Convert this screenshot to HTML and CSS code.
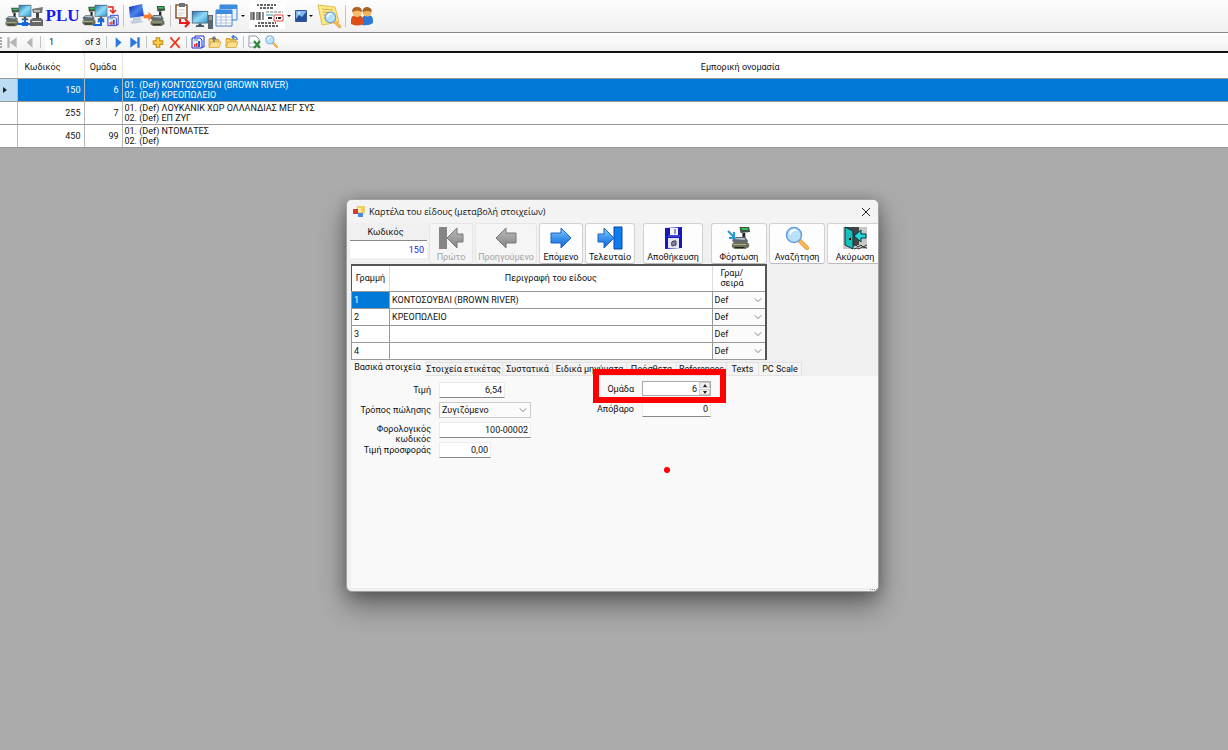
FILE: index.html
```html
<!DOCTYPE html>
<html lang="el">
<head>
<meta charset="utf-8">
<title>PLU</title>
<link rel="stylesheet" href="styles.css">
</head>
<body>
<svg class="defs" aria-hidden="true">
  <defs>
    <linearGradient id="gBlue" x1="0" y1="0" x2="0" y2="1"><stop offset="0" stop-color="#8cd0ff"/><stop offset=".5" stop-color="#3b93ee"/><stop offset="1" stop-color="#1467cf"/></linearGradient>
    <linearGradient id="gGray" x1="0" y1="0" x2="0" y2="1"><stop offset="0" stop-color="#bbb"/><stop offset="1" stop-color="#858585"/></linearGradient>
    <linearGradient id="gScreen" x1="0" y1="0" x2="1" y2="1"><stop offset="0" stop-color="#2c78b8"/><stop offset=".5" stop-color="#8fdcf5"/><stop offset="1" stop-color="#3a9ad2"/></linearGradient>
    <linearGradient id="gNavy" x1="0" y1="0" x2="1" y2="1"><stop offset="0" stop-color="#0a1fa8"/><stop offset=".5" stop-color="#4a86f0"/><stop offset="1" stop-color="#1230b8"/></linearGradient>
    <symbol id="scale" viewBox="0 0 22 24" preserveAspectRatio="none">
      <path d="M10 1h10l1 5-10 1z" fill="#454d48"/><path d="M12 2h7v2h-7z" fill="#27c84a"/>
      <path d="M13 7h3v8h-3z" fill="#222"/>
      <path d="M2 14l4-3h10l3 4-2 2H4z" fill="#5d6c74"/><path d="M4 13l3-1h8l1 2z" fill="#b5c4c9"/>
      <path d="M2 18l3-2h13l2 2v3l-4 2H5l-3-2z" fill="#6b705a"/><path d="M3 18h14v1H3z" fill="#b0b392"/><path d="M5 21h10v1H5z" fill="#20241b"/>
    </symbol>
    <symbol id="monitor" viewBox="0 0 22 20" preserveAspectRatio="none">
      <path d="M1 1h20v14H1z" fill="#4c6876"/><path d="M2 2h18v12H2z" fill="url(#gScreen)"/>
      <path d="M9 15h4v2h3v2H6v-2h3z" fill="#415661"/>
    </symbol>
    <symbol id="report" viewBox="0 0 14 14">
      <path d="M4 1h9v11H4z" fill="#fff" stroke="#1d2bd8"/><path d="M1 3h8l2 2v8H1z" fill="#eaf1ff" stroke="#1d2bd8"/>
      <path d="M3 9h1.500v3H3zM5 8h1.500v4H5z" fill="#e02a2a"/><path d="M7 6h2v6H7z" fill="#2455e0"/><path d="M3 5h4" stroke="#34a060"/>
    </symbol>
    <symbol id="lens" viewBox="0 0 24 24">
      <path d="M14 14l8 8" stroke="#c98a35" stroke-width="4" stroke-linecap="round"/><path d="M15 15l7 7" stroke="#ffb64c" stroke-width="3" stroke-linecap="round"/>
      <circle cx="9" cy="9" r="7.500" fill="#b7e1fb" stroke="#6a9fe0" stroke-width="1.600"/><path d="M5 9a5 5 0 0 1 6-5" stroke="#fff" stroke-width="2" fill="none"/>
    </symbol>
    <symbol id="folder" viewBox="0 0 14 14">
      <path d="M1 3h4l1 1h5v3H1z" fill="#e2a932"/><path d="M1 12V4h3l1 1h6v2" fill="#f7d372" stroke="#c99127" stroke-width=".7"/><path d="M3 7h10l-2 5.500H1z" fill="#ffe08a" stroke="#d09a2b" stroke-width=".7"/>
    </symbol>
    <symbol id="arrowR" viewBox="0 0 20 20"><path d="M1 7h9V2l9 8-9 8v-5H1z" stroke-width="1" stroke-linejoin="round"/></symbol>
    <symbol id="chev" viewBox="0 0 10 6"><path d="M1 1l4 4 4-4" fill="none" stroke="#666"/></symbol>
  </defs>
</svg>

<main class="app">
  <div class="toolbar main-bar" role="toolbar" aria-label="Main">
    <button class="tool" aria-label="Network"><svg width="40" height="24" viewBox="0 0 40 24"><use href="#scale" x="0" y="3" width="16" height="20"/><use href="#monitor" x="14" y="0" width="14" height="17"/><path d="M14 20h14M21 15v4" stroke="#1568dc" stroke-width="2"/><path d="M18 18h6v4h-6z" fill="#1568dc"/><path d="M28 5l11-2-1 6h-9z" fill="#777"/><path d="M30 6h6v2h-6z" fill="#bbb"/><path d="M32 9h3v7h-3z" fill="#444"/><path d="M26 16l3-2h8l2 2v6H26z" fill="#686868"/><path d="M28 17h9v1h-9z" fill="#ddd"/></svg></button>
    <button class="tool plu">PLU</button>
    <button class="tool" aria-label="Reports"><svg width="38" height="24" viewBox="0 0 38 24"><use href="#scale" x="0" y="2" width="16" height="20"/><use href="#monitor" x="13" y="0" width="14" height="17"/><path d="M12 21h8v-6M17 18l3-3 3 3" stroke="#1568dc" stroke-width="2" fill="none"/><path d="M27 3h5v6M29 6l3 3 3-3" stroke="#ef1d1d" stroke-width="1.500" fill="none"/><use href="#report" x="26" y="10" width="12" height="13"/></svg></button>
    <span class="sep"></span>
    <button class="tool" aria-label="Send"><svg width="38" height="24" viewBox="0 0 38 24"><path d="M1 3l13-3 2 12-14 2z" fill="url(#gNavy)"/><path d="M5 14l7-1 2 3-9 1zM2 17l10-1 4 2-12 2z" fill="#c3ccdd"/><use href="#arrowR" x="15" y="7" width="11" height="11" fill="#ff7a28"/><use href="#scale" x="21" y="1" width="17" height="22"/></svg></button>
    <span class="sep"></span>
    <button class="tool" aria-label="Paste to PC"><svg width="38" height="26" viewBox="0 0 38 26"><path d="M1 2h11v13H1z" fill="#fff" stroke="#89552d" stroke-width="1.500"/><path d="M4 0h6v4H4z" fill="#6b737e"/><path d="M3 7h7M3 10h7M3 12h5" stroke="#ccc"/><path d="M5 16v4h8M10 16l4 4-4 4" stroke="#e51c1c" stroke-width="2" fill="none"/><use href="#monitor" x="16" y="7" width="18" height="18"/><path d="M33 12h5v14h-5z" fill="#59666c"/><path d="M34 14h3M34 16h3" stroke="#ccc"/></svg></button>
    <button class="tool drop" aria-label="Tables"><svg width="24" height="24" viewBox="0 0 24 24"><path d="M5 1h17v15H5z" fill="#e9f3ff" stroke="#3a7fcf"/><path d="M5 1h17v4H5z" fill="#3c8de0"/><path d="M1 6h16v16H1z" fill="#fff" stroke="#3a7fcf"/><path d="M1 6h16v4H1z" fill="#3c8de0"/><path d="M2 13h14M2 16h14M2 19h14M6 10v12M11 10v12" stroke="#b4bedb"/></svg><i class="caret"></i></button>
    <button class="tool drop" aria-label="Label"><svg width="36" height="26" viewBox="0 0 36 26"><path d="M0 0h36v26H0z" fill="#fff"/><path d="M8 2h19M11 5h13M9 20h18M6 23h24" stroke="#333" stroke-width="1.500" stroke-dasharray="2 1 3 1"/><path d="M2 9v8M4 9v8M5 9v8M8 9v8M10 9v8M11 9v8M14 9v8" stroke="#222"/><path d="M17 9h17" stroke="#777" stroke-dasharray="3 1"/><path d="M17 12h7" stroke="#3595a8"/><path d="M19 15h4" stroke="#333" stroke-width="2"/><path d="M25 12h9v6h-9z" fill="#fff" stroke="#e04a3b"/><path d="M27 15h6" stroke="#222" stroke-width="2" stroke-dasharray="1 1 3 1"/></svg><i class="caret"></i></button>
    <button class="tool drop" aria-label="Image"><svg width="12" height="12" viewBox="0 0 12 12"><path d="M.5.500h11v11H.5z" fill="#83b8f3" stroke="#31579c"/><path d="M1 9l3-4 3 2 4-5v9H1z" fill="#244d9d"/><circle cx="4" cy="3" r="1" fill="#fff"/></svg><i class="caret"></i></button>
    <button class="tool" aria-label="Find note"><svg width="24" height="24" viewBox="0 0 24 24"><path d="M1 1l17 2 4 15-17 3z" fill="#fce884" stroke="#e2bd4a"/><path d="M5 5l11 1M6 8l10 1M6 11l9 1M7 14l8 1" stroke="#d2b04c"/><use href="#lens" x="7" y="7" width="17" height="17"/></svg></button>
    <span class="sep"></span>
    <button class="tool" aria-label="Users"><svg width="24" height="20" viewBox="0 0 24 20"><path d="M12 19v-6q1-4 5-4 6 0 6 5v3q-4 3-11 2" fill="#2d78d6"/><circle cx="17" cy="6" r="4.500" fill="#f0b45c"/><path d="M12.500 6q0-5 5-5 5 1 4 5-3-2-9 0" fill="#a56422"/><path d="M1 18v-4q0-5 6-5t6 5v4q-5 3-12 0" fill="#df4e19"/><circle cx="7" cy="6.500" r="4.500" fill="#f5bd67"/><path d="M2 6q0-5 5-5t5 5Q8 3 2 6" fill="#b0601f"/></svg></button>
  </div>

  <div class="toolbar nav-bar" role="toolbar" aria-label="Navigation">
    <span class="grip"></span>
    <button class="mini" aria-label="First"><svg viewBox="0 0 12 12"><path d="M2 2h2v9H2zM10 2v9L4 6.500z" fill="#b6b6b6"/></svg></button>
    <button class="mini" aria-label="Previous"><svg viewBox="0 0 12 12"><path d="M9 2v9L4 6.500z" fill="#b6b6b6"/></svg></button>
    <span class="sep"></span>
    <input class="page" aria-label="Position" value="1">
    <span class="of">of 3</span>
    <span class="sep"></span>
    <button class="mini" aria-label="Next"><svg viewBox="0 0 12 12"><path d="M4 2v9l5-4.500z" fill="#2878dd"/></svg></button>
    <button class="mini" aria-label="Last"><svg viewBox="0 0 12 12"><path d="M2 2v9l6-4.500zM8 2h2v9H8z" fill="#2878dd"/></svg></button>
    <span class="sep"></span>
    <button class="mini" aria-label="Add"><svg viewBox="0 0 12 12"><path d="M4.500 2.500h3v2.500h2.500v3H7.500v2.500h-3V8H2V5h2.500z" fill="#ffcf45" stroke="#c48e1e"/></svg></button>
    <button class="mini" aria-label="Delete"><svg viewBox="0 0 12 12"><path d="M2 2l8 9M10 2L2 11" stroke="#ef3a22" stroke-width="1.500"/></svg></button>
    <span class="sep"></span>
    <button class="mini" aria-label="Report"><svg viewBox="0 0 14 14"><use href="#report"/></svg></button>
    <button class="mini" aria-label="Export"><svg viewBox="0 0 14 14"><use href="#folder"/><path d="M6 7V2M4 4l2-2 2 2" stroke="#6a7886" fill="none" stroke-width="1.500"/></svg></button>
    <button class="mini" aria-label="Import"><svg viewBox="0 0 14 14"><use href="#folder"/><path d="M12 5q0-4-5-3M9 0L7 2l2 2" stroke="#397dc4" fill="none" stroke-width="1.400"/></svg></button>
    <span class="sep"></span>
    <button class="mini" aria-label="Excel"><svg viewBox="0 0 14 14"><path d="M1 1h7l3 3v8H1z" fill="#fff" stroke="#879aac"/><path d="M2 8h6" stroke="#a8bfd6"/><path d="M6 6l6 7M12 6l-6 7" stroke="#27852e" stroke-width="2"/></svg></button>
    <button class="mini" aria-label="Search"><svg viewBox="0 0 26 26"><use href="#lens" width="24" height="24"/></svg></button>
  </div>

  <table class="items">
    <colgroup><col class="c-mark"><col class="c-code"><col class="c-group"><col></colgroup>
    <thead><tr><th></th><th class="sortable">Κωδικός</th><th>Ομάδα</th><th class="trade">Εμπορική ονομασία</th></tr></thead>
    <tbody>
      <tr class="selected"><td><i class="marker"></i></td><td>150</td><td>6</td><td>01. (Def) ΚΟΝΤΟΣΟΥΒΛΙ (BROWN RIVER)<br>02. (Def) ΚΡΕΟΠΩΛΕΙΟ</td></tr>
      <tr><td></td><td>255</td><td>7</td><td>01. (Def) ΛΟΥΚΑΝΙΚ ΧΩΡ ΟΛΛΑΝΔΙΑΣ ΜΕΓ ΣΥΣ<br>02. (Def) ΕΠ ΖΥΓ</td></tr>
      <tr><td></td><td>450</td><td>99</td><td>01. (Def) ΝΤΟΜΑΤΕΣ<br>02. (Def)</td></tr>
    </tbody>
  </table>
</main>

<section class="dialog" role="dialog" aria-labelledby="dlg-title">
  <header class="titlebar">
    <svg width="12" height="12" viewBox="0 0 12 12"><path d="M4 0h8v7H4z" fill="#f6cf49" stroke="#ccc" stroke-width=".6"/><path d="M0 3h5v5H0z" fill="#d43b2d"/><path d="M5 7h5v4H5z" fill="#4b87e4"/><path d="M5 2h3v4H5z" fill="#fff1a8"/></svg>
    <h1 id="dlg-title">Καρτέλα του είδους (μεταβολή στοιχείων)</h1>
    <button class="close" aria-label="Close"><svg width="10" height="10" viewBox="0 0 10 10"><path d="M1 1l8 8M9 1L1 9" stroke="#222"/></svg></button>
  </header>

  <div class="commands">
    <div class="code"><label for="code">Κωδικός</label><input id="code" value="150"></div>
    <button class="cmd w-44" disabled><svg viewBox="0 0 26 24"><path d="M1 1h8v22H1z" fill="#858585"/><path d="M25 8h-6V2L9 12l10 10v-6h6z" fill="url(#gGray)" stroke="#777"/></svg>Πρώτο</button>
    <button class="cmd w-62" disabled><svg viewBox="0 0 26 24"><path d="M23 7H13V2L3 12l10 10v-5h10z" fill="url(#gGray)" stroke="#777"/></svg>Προηγούμενο</button>
    <button class="cmd w-44"><svg viewBox="0 0 26 24"><path d="M3 7h10V2l10 10-10 10v-5H3z" fill="url(#gBlue)" stroke="#1c64bb"/></svg>Επόμενο</button>
    <button class="cmd w-50"><svg viewBox="0 0 26 24"><path d="M17 1h8v22h-8z" fill="#0f7cf0" stroke="#0844a4"/><path d="M1 8h6V2l10 10L7 22v-6H1z" fill="url(#gBlue)" stroke="#1c64bb"/></svg>Τελευταίο</button>
    <button class="cmd w-60 apart"><svg viewBox="0 0 26 24"><path d="M5 2l17-1v21L5 23z" fill="#1618b7"/><path d="M10 2h8v7h-8z" fill="#f4f4f4"/><path d="M8 12h11v10H8z" fill="#e4e4ec"/><path d="M15 3v5M12 20q-2-6 4-5v4z" stroke="#3c3c5c" fill="#80809b"/><path d="M8 10h12" stroke="#6b6df4" stroke-width="1"/></svg>Αποθήκευση</button>
    <button class="cmd w-56 apart"><svg viewBox="0 0 26 24"><use href="#scale" x="4" y="0" width="21" height="24"/><path d="M2 5l6 6M8 6v6H3" stroke="#2499da" stroke-width="2" fill="none"/></svg>Φόρτωση</button>
    <button class="cmd w-56"><svg viewBox="0 0 24 24"><use href="#lens"/></svg>Αναζήτηση</button>
    <button class="cmd w-56"><svg viewBox="0 0 26 24"><path d="M1 1h24v22H1z" fill="#c7c7c7"/><path d="M3 1h14v18H3z" fill="#444"/><path d="M3 1l8 4v18l-8-4z" fill="#18c0bd" stroke="#033"/><path d="M8 12v2" stroke="#000" stroke-width="2"/><path d="M24 8h-5V4l-7 6 7 6v-4h5z" fill="#25d6d3" stroke="#034"/><path d="M11 20l3-1 2 2 3-2 2 2 4-2M12 23l3-1 2 1 3-2 5 1" stroke="#333" fill="none"/></svg>Ακύρωση</button>
  </div>

  <table class="lines">
    <colgroup><col class="l-no"><col><col class="l-type"></colgroup>
    <thead><tr><th>Γραμμή</th><th>Περιγραφή του είδους</th><th class="type">Γραμ/<br>σειρά</th></tr></thead>
    <tbody>
      <tr><td class="on">1</td><td>ΚΟΝΤΟΣΟΥΒΛΙ (BROWN RIVER)</td><td><span class="pick"><select aria-label="Γραμματοσειρά 1"><option>Def</option></select><svg><use href="#chev"/></svg></span></td></tr>
      <tr><td>2</td><td>ΚΡΕΟΠΩΛΕΙΟ</td><td><span class="pick"><select aria-label="Γραμματοσειρά 2"><option>Def</option></select><svg><use href="#chev"/></svg></span></td></tr>
      <tr><td>3</td><td></td><td><span class="pick"><select aria-label="Γραμματοσειρά 3"><option>Def</option></select><svg><use href="#chev"/></svg></span></td></tr>
      <tr><td>4</td><td></td><td><span class="pick"><select aria-label="Γραμματοσειρά 4"><option>Def</option></select><svg><use href="#chev"/></svg></span></td></tr>
    </tbody>
  </table>

  <div class="tabs" role="tablist">
    <button role="tab" aria-selected="true" class="tab t-74">Βασικά στοιχεία</button>
    <button role="tab" class="tab t-78">Στοιχεία ετικέτας</button>
    <button role="tab" class="tab t-50">Συστατικά</button>
    <button role="tab" class="tab t-74">Ειδικά μηνύματα</button>
    <button role="tab" class="tab t-50">Πρόσθετα</button>
    <button role="tab" class="tab t-50">References</button>
    <button role="tab" class="tab t-32">Texts</button>
    <button role="tab" class="tab t-43">PC Scale</button>
  </div>

  <div class="panel" role="tabpanel">
    <div class="fields left">
      <label for="price">Τιμή</label><input id="price" class="f-66" value="6,54">
      <label for="sale">Τρόπος πώλησης</label><span class="pick wide"><select id="sale"><option>Ζυγιζόμενο</option></select><svg><use href="#chev"/></svg></span>
      <label for="tax" class="clip">Φορολογικός κωδικός</label><input id="tax" class="f-92" value="100-00002">
      <label for="offer">Τιμή προσφοράς</label><input id="offer" class="f-52" value="0,00">
    </div>
    <div class="fields right">
      <label for="group">Ομάδα</label><span class="spin"><input id="group" value="6"><span class="steps"><button aria-label="Up"><i class="up"></i></button><button aria-label="Down"><i class="down"></i></button></span></span>
      <label for="tare">Απόβαρο</label><input id="tare" class="f-69" value="0">
    </div>
  </div>
  <div class="highlight"></div>
  <div class="dot"></div>
  <div class="sizer"></div>
</section>
</body>
</html>
```
FILE: styles.css
```css
* { box-sizing: border-box; }
body { margin: 0; min-height: 100vh; background: #ababab; font: 9px/10px Roboto, "Liberation Sans", sans-serif; color: #111; overflow: hidden; position: relative; }
button, input, select { font: inherit; color: inherit; margin: 0; padding: 0; border: 0; border-radius: 0; background: none; min-width: 0; }
svg { display: block; flex: none; }
.defs { position: absolute; width: 0; height: 0; }

.toolbar { display: flex; align-items: center; background: linear-gradient(#fdfdfd, #f0f0f0); }
.main-bar { height: 33px; padding: 0 4px; gap: 2px; border-bottom: 1px solid #858585; }
.nav-bar { height: 20px; padding-right: 4px; background: linear-gradient(#fdfdfd, #f2f2f2); border-bottom: 2px solid #111; gap: 3px; }
.sep { width: 1px; height: 22px; background: #c4c4c4; margin: 0 2px; flex: none; }
.nav-bar .sep { height: 12px; margin: 0 1px; }
.tool { display: flex; align-items: center; flex: none; }
.plu { color: #1717f0; font: bold 17px/24px "Liberation Serif", serif; width: 33px; justify-content: center; }
.drop { gap: 2px; margin-right: 2px; }
.caret { border: 2px solid transparent; border-top-color: #111; border-bottom: 0; }
.grip { width: 2px; height: 11px; background: repeating-linear-gradient(#aaa 0 2px, #fff 2px 3px); }
.mini { width: 14px; height: 14px; flex: none; }
.mini svg { width: 14px; height: 14px; }
.page { width: 37px; height: 17px; padding-left: 4px; background: #fff; }
.of { white-space: nowrap; width: 17px; }

.items { width: 100%; table-layout: fixed; border-collapse: collapse; background: #fff; }
.items th { height: 25px; font-weight: 400; padding: 3px 0 0; border-bottom: 1px solid #999; border-right: 1px solid #e2e2e2; }
.items .sortable { padding-right: 16px; }
.items .trade { padding-left: 130px; }
.items td { height: 23px; padding: 0 3px; text-align: right; border-right: 1px solid #b8b8b8; border-bottom: 1px solid #999; }
.items td:last-child { text-align: left; padding: 0 2px; }
.items tr > :last-child { border-right: 0; }
.c-mark { width: 17px; }
.c-code { width: 67px; }
.c-group { width: 38px; }
.selected { background: #0078d7; color: #fff; }
.selected td:first-child { background: #bcdcf4; }
.marker { display: block; width: 0; border: 3px solid transparent; border-left: 4px solid #222; border-right: 0; }

.dialog { position: absolute; left: 346px; top: 199px; width: 533px; background: #f0f0f0; border: 1px solid #a0a0a0; border-radius: 6px; box-shadow: 0 14px 28px rgba(0, 0, 0, .4), 0 2px 14px rgba(0, 0, 0, .25); overflow: hidden; padding: 0 0 3px 3px; }
.titlebar { display: flex; align-items: center; gap: 4px; height: 23px; margin-left: -3px; padding: 0 6px; background: #f3f3f3; }
.titlebar h1 { margin: 0; flex: 1; font: 9px/12px "Open Sans", sans-serif; }
.close { padding: 1px; }
.commands { display: flex; gap: 2px; height: 41px; }
.code { width: 77px; display: flex; flex-direction: column; gap: 3px; padding-top: 4px; }
.code label { text-align: center; padding-right: 6px; }
.code input { height: 18px; width: 77px; text-align: right; color: #2a17dd; background: #fff; border-top: 1px solid #888; padding-right: 3px; }
.cmd { display: flex; flex-direction: column; align-items: center; gap: 2px; flex: none; padding-top: 2px; background: #fdfdfd; border: 1px solid #d2d2d2; border-bottom-color: #bbb; border-radius: 3px; white-space: nowrap; }
.cmd svg { width: 26px; height: 24px; }
.cmd:disabled { color: #a3a3a3; background: #f5f5f5; border-color: #e6e6e6; }
.w-44 { width: 44px; }
.w-50 { width: 50px; }
.w-56 { width: 56px; }
.w-60 { width: 60px; }
.w-62 { width: 62px; }
.apart { margin-left: 6px; }

.lines { width: 416px; margin: 0 0 0 1px; table-layout: fixed; border-collapse: collapse; background: #fff; border: 2px solid #555; border-left-width: 1px; border-bottom-width: 1px; }
.lines th { height: 26px; padding: 0; font-weight: 400; border-right: 1px solid #ddd; border-bottom: 1px solid #999; }
.lines .type { text-align: left; padding-left: 8px; }
.lines td { height: 17px; padding: 0 2px; border: 1px solid #999; }
.lines td:last-child { padding: 0; }
.lines .on { background: #0078d7; color: #fff; }
.l-no { width: 38px; }
.l-type { width: 54px; }
.pick { display: flex; position: relative; background: #fbfbfb; height: 16px; }
.pick select { appearance: none; flex: 1; padding-left: 2px; }
.pick svg { position: absolute; right: 3px; top: 5px; width: 8px; height: 6px; pointer-events: none; }

.tabs { display: flex; height: 16px; align-items: flex-end; margin-left: 1px; }
.tab { height: 14px; flex: none; white-space: nowrap; border: 1px solid #e3e3e3; border-left: 0; background: #f3f3f3; }
.tab[aria-selected] { height: 16px; background: #f9f9f9; border-color: #f9f9f9; padding-bottom: 2px; }
.t-32 { width: 32px; }
.t-43 { width: 43px; }
.t-50 { width: 50px; }
.t-74 { width: 74px; }
.t-78 { width: 78px; }

.panel { display: flex; align-items: flex-start; background: #f9f9f9; min-height: 212px; margin-left: 1px; }
.fields { display: grid; grid-auto-rows: 16px; row-gap: 4px; column-gap: 8px; align-items: center; padding-top: 5px; }
.left { grid-template-columns: 80px 92px; padding-top: 6px; }
.right { grid-template-columns: 103px 69px; }
.fields label { text-align: right; white-space: nowrap; }
.fields .clip { white-space: normal; width: 60px; justify-self: end; align-self: start; padding-top: 2px; height: 20px; overflow: hidden; }
.fields input { height: 16px; background: #fff; border: 1px solid #ececec; border-bottom-color: #888; text-align: right; padding-right: 2px; }
.wide { border: 1px solid #ccc; height: 16px; }
.wide svg { top: 4px; }
.f-52 { width: 52px; }
.f-66 { width: 66px; }
.f-69 { width: 69px; }
.f-92 { width: 92px; }
.spin { display: flex; background: #fff; border: 1px solid #aaa; height: 15px; }
.fields .spin input { flex: 1; border: 0; height: 13px; }
.steps { display: flex; flex-direction: column; width: 11px; gap: 1px; }
.steps button { flex: 1; background: #f0f0f0; border: 1px solid #ccc; display: grid; place-items: center; }
.up, .down { border: 2px solid transparent; }
.up { border-bottom: 3px solid #222; border-top: 0; }
.down { border-top: 3px solid #222; border-bottom: 0; }
.highlight { position: absolute; left: 246px; top: 169px; width: 133px; height: 34px; border: 6px solid #f00; pointer-events: none; }
.dot { position: absolute; left: 317px; top: 267px; width: 6px; height: 6px; border-radius: 50%; background: #f00; }
.sizer { position: absolute; right: 1px; bottom: 1px; width: 7px; border-top: 1px dotted #999; }
```
